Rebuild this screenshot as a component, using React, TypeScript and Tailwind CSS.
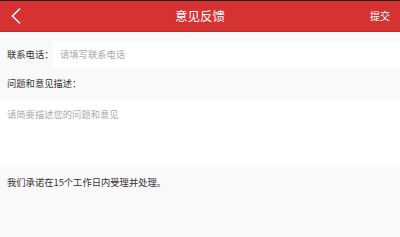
import React from "react";

const font = { fontFamily: '"Noto Sans CJK SC", "Noto Sans", sans-serif' };

export default function App() {
  return (
    <div className="w-[400px] h-[237px] bg-[#f9f9f9] flex flex-col overflow-hidden" style={font}>
      <div className="h-px bg-[#222]" />
      <div className="h-[31px] bg-[#d63232] border-b border-[#c62424] flex items-center relative">
        <div className="w-[30px] flex justify-center pl-[1px]">
          <svg width="12" height="18" viewBox="0 0 12 18">
            <path d="M10 1.5 L2.5 9 L10 16.5" fill="none" stroke="#fff" strokeWidth="1.6" />
          </svg>
        </div>
        <div className="flex-1 text-center text-white text-[12.5px] leading-none">意见反馈</div>
        <div className="w-[30px] text-white text-[10px] leading-none whitespace-nowrap">提交</div>
      </div>
      <div className="h-[10px]" />
      <div className="flex h-[26px] items-center">
        <div className="w-[53px] shrink-0 whitespace-nowrap pl-[7px] text-[9.3px] text-[#333] leading-none">联系电话：</div>
        <div className="flex-1 h-full bg-white flex items-center pl-[7px] text-[9.3px] text-[#aaa] leading-none">请填写联系电话</div>
      </div>
      <div className="h-[32px] flex items-center pl-[7px] text-[9.3px] text-[#333] leading-none">问题和意见描述：</div>
      <div className="h-[65px] bg-white pl-[7px] pt-[10px] text-[9.3px] text-[#aaa] leading-none">请简要描述您的问题和意见</div>
      <div className="pl-[7px] pt-[13px] text-[9.3px] text-[#333] leading-none">我们承诺在15个工作日内受理并处理。</div>
    </div>
  );
}
